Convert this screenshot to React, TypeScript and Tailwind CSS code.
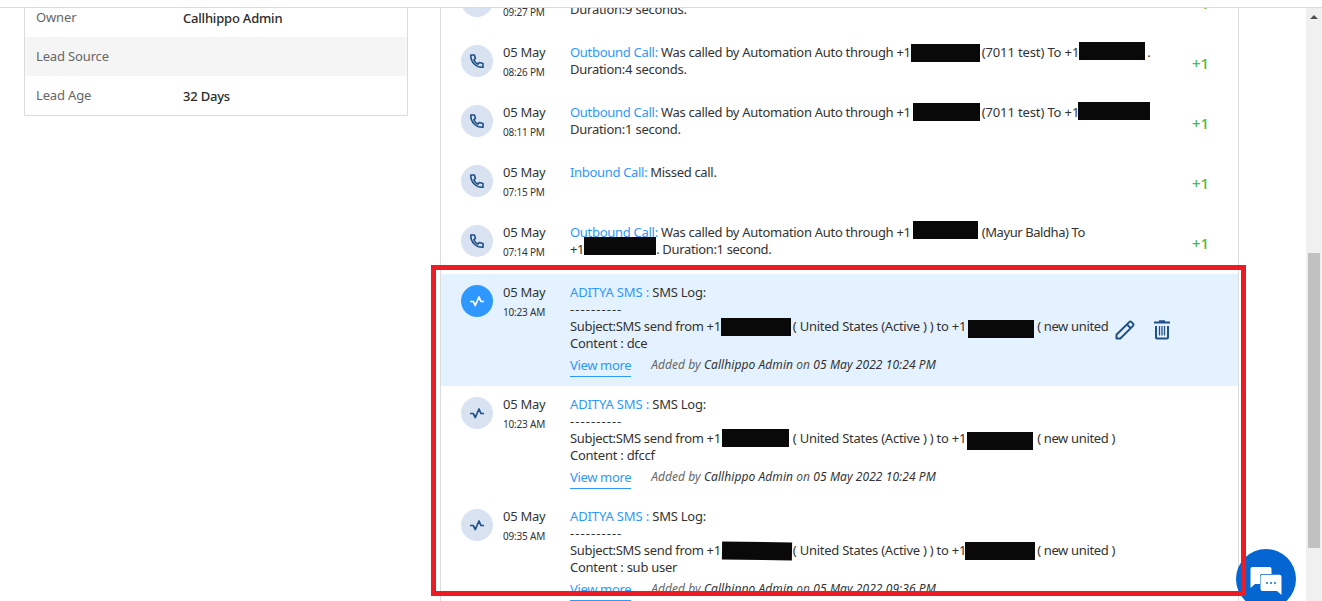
import type { ReactNode } from "react";
import clsx from "clsx";

function PhoneIcon() {
  return (
    <svg viewBox="0 0 16 16" className="h-4 w-4" fill="none" stroke="#1f5088" strokeWidth="1.6" strokeLinejoin="round">
      <path d="M1.8 2h3.6l1 3.5-1.6 1.3c.8 1.9 2.1 3.4 4.1 4.3l1.4-1.6 3.7 1v3.7C7.2 14.6 1.5 9.2 1.8 2z" />
    </svg>
  );
}

function PulseIcon() {
  return (
    <svg viewBox="0 0 16 16" className="h-4 w-4" fill="none" stroke="currentColor" strokeWidth="1.7" strokeLinejoin="round">
      <path d="M1 8.5h3.3l2 4L10 4l2 4.500h3" />
    </svg>
  );
}

function EditIcon() {
  return (
    <svg viewBox="0 0 20 20" className="h-5 w-5" fill="none" stroke="#1f5088" strokeWidth="2" strokeLinejoin="round">
      <path d="M1.5 18.5v-3.8L14.2 2.1a1.6 1.6 0 0 1 2.3 0l1.5 1.5a1.6 1.6 0 0 1 0 2.3L5.3 18.5zM12 4.5l3.6 3.6" />
    </svg>
  );
}

function TrashIcon() {
  return (
    <svg viewBox="0 0 16 20" className="h-5 w-4" fill="none" stroke="#1f5088" strokeWidth="2">
      <path d="M0 2.500h16M5 1.300h6M2 6v11.500q0 1 1 1h10q1 0 1-1V6" />
      <path d="M5.500 6v9.500M8 6v9.500M10.500 6v9.500" strokeWidth="1.3" />
    </svg>
  );
}

// Hidden phone number: the slot keeps the number's width, the bar lies over it
function Mask({ slot, bar }: { slot: string; bar: string }) {
  return (
    <span className={clsx("relative inline-block h-[17px] align-top", slot)}>
      <span className={clsx("absolute h-[18px] bg-[#090909]", bar)} />
    </span>
  );
}

type RowProps = {
  time: string;
  icon: ReactNode;
  children: ReactNode;
  className?: string;
  active?: boolean;
  aside?: ReactNode;
};

function Row({ time, icon, children, className, active, aside }: RowProps) {
  return (
    <div className={clsx("flex shrink-0 pl-5", className, active && "bg-[#e4f2ff]")}>
      <div
        className={clsx(
          "mt-[11px] flex h-8 w-8 shrink-0 items-center justify-center rounded-full",
          active ? "bg-[#2e98ff] text-white" : "bg-[#d9e2f1] text-[#1f5088]"
        )}
      >
        {icon}
      </div>
      <div className="ml-[10px] w-[67px] shrink-0 pt-[10px]">
        <div className="text-[13px] leading-[17px] tracking-[-0.25px]">05 May</div>
        <div className="mt-[3px] text-[10px] leading-[17px] tracking-[-0.2px]">{time}</div>
      </div>
      <div className="w-[600px] shrink-0 whitespace-nowrap pt-[10px] text-[13px] leading-[17px] tracking-[-0.25px]">
        {children}
      </div>
      {aside}
    </div>
  );
}

function CallRow({ time, children }: { time: string; children: ReactNode }) {
  return (
    <Row
      time={time}
      icon={<PhoneIcon />}
      className="h-[60px]"
      aside={<div className="ml-[22px] pt-[19px] text-[15px] font-medium leading-5 text-[#43bd43]">+1</div>}
    >
      {children}
    </Row>
  );
}

function Outbound({ children }: { children: ReactNode }) {
  return (
    <div>
      <span className="tracking-[-0.29px]">
        <span className="text-[#2e98ff]">Outbound Call:</span> Was called by Automation Auto through +1
      </span>
      {children}
    </div>
  );
}

type SmsProps = {
  time: string;
  content: string;
  added: string;
  from: ReactNode;
  to: ReactNode;
  active?: boolean;
};

function SmsRow({ time, content, added, from, to, active }: SmsProps) {
  return (
    <Row
      time={time}
      icon={<PulseIcon />}
      className="h-[112px]"
      active={active}
      aside={
        active && (
          <div className="-ml-[55px] flex gap-[19px] pt-[46px]">
            <EditIcon />
            <TrashIcon />
          </div>
        )
      }
    >
      <div>
        <span className="text-[#2e98ff] tracking-[-0.12px]">ADITYA SMS :</span> SMS Log:
      </div>
      <div className="tracking-[1.05px]">----------</div>
      <div>
        <span className="tracking-[-0.32px]">Subject:SMS send from +1</span>
        {from}( United States (Active ) ) to +1{to}
        <span className="tracking-[-0.35px]">( new united{!active && " )"}</span>
      </div>
      <div>Content : {content}</div>
      <div className="mt-[3px] flex">
        <span className="h-[22px] border-b border-[#2e98ff] pt-0.5 tracking-[-0.35px] text-[#2e98ff]">View more</span>
        <span className="ml-5 pt-px text-[12px] italic tracking-[0.07px]">
          <span className="text-[#666]">Added by</span> Callhippo Admin <span className="text-[#555]">on</span> {added}
        </span>
      </div>
    </Row>
  );
}

function LeadDetails() {
  return (
    <div className="-mt-[11px] h-[119px] w-[384px] shrink-0 border border-[#dcdcdc] text-[13px] text-[#666]">
      {[
        ["Owner", "Callhippo Admin"],
        ["Lead Source", ""],
        ["Lead Age", "32 Days"],
      ].map(([label, value]) => (
        <div key={label} className="flex h-[39px] items-center pl-[11px] even:bg-[#f5f5f5]">
          <span className="w-[147px] tracking-[-0.15px]">{label}</span>
          <span className="pt-0.5 font-medium tracking-[-0.2px] text-[#2b2b2b]">{value}</span>
        </div>
      ))}
    </div>
  );
}

function Scrollbar() {
  return (
    <div className="ml-auto flex w-4 shrink-0 flex-col items-center bg-[#f0f0f0]">
      <svg viewBox="0 0 8 4" className="mt-[7px] h-1 w-2 shrink-0" fill="#505050">
        <path d="M0 4l4-4 4 4z" />
      </svg>
      <div className="mt-[234px] h-[295px] w-3 shrink-0 bg-[#c1c1c1]" />
    </div>
  );
}

function ChatButton() {
  return (
    <div className="absolute left-[1236px] top-[549px] flex h-[60px] w-[60px] items-center justify-center rounded-full bg-[#0566d1]">
      <svg viewBox="0 0 32 28" className="mt-1 h-7 w-8" fill="white">
        <path d="M2.5 0h17q2 0 2 2v5H12q-2 0-2 2v8H5l-4.500 4V2q0-2 2-2z" />
        <path d="M12.5 7.8h17q2 0 2 2V28L27 24H12.500q-2 0-2-2V9.800q0-2 2-2z" />
        <path d="M16 15h2v2h-2zM20 15h2v2h-2zM24 15h2v2h-2z" fill="#4c91dc" />
      </svg>
    </div>
  );
}

export default function App() {
  return (
    <div className="relative h-[601px] w-[1322px] overflow-hidden bg-white pt-[7px] font-['Noto_Sans',sans-serif] text-[#333]">
      <div className="flex h-[594px] overflow-hidden border-t border-[#dcdcdc] pl-6">
        <LeadDetails />
        <div className="-mt-[34px] ml-8 flex h-[700px] w-[799px] shrink-0 flex-col border-x border-[#dcdcdc]">
          <CallRow time="09:27 PM">
            <Outbound>
              <Mask slot="w-[71px]" bar="left-0 top-0 w-[69px]" />
            </Outbound>
            <div>Duration:9 seconds.</div>
          </CallRow>
          <CallRow time="08:26 PM">
            <Outbound>
              <Mask slot="w-[71px]" bar="left-0 top-0 w-[69px]" />
              <span className="tracking-[-0.13px]">(7011 test) To +1</span>
              <Mask slot="w-[68px]" bar="left-0 -top-[2px] w-[66px]" />.
            </Outbound>
            <div>Duration:4 seconds.</div>
          </CallRow>
          <CallRow time="08:11 PM">
            <Outbound>
              <Mask slot="w-[71px]" bar="left-[2px] -top-px w-[67px]" />
              <span className="tracking-[-0.13px]">(7011 test) To +1</span>
              <Mask slot="w-[68px]" bar="-left-px -top-[2px] w-[72px]" />
            </Outbound>
            <div>Duration:1 second.</div>
          </CallRow>
          <CallRow time="07:15 PM">
            <span className="tracking-[-0.32px]">
              <span className="text-[#2e98ff]">Inbound Call:</span> Missed call.
            </span>
          </CallRow>
          <CallRow time="07:14 PM">
            <Outbound>
              <Mask slot="w-[71px]" bar="left-[2px] -top-[3px] w-[65px]" />
              <span className="tracking-[-0.42px]">(Mayur Baldha) To</span>
            </Outbound>
            <div className="tracking-[-0.35px]">
              +1
              <Mask slot="w-[72px]" bar="left-0 -top-[4px] w-[72px]" />. Duration:1 second.
            </div>
          </CallRow>
          <SmsRow
            active
            time="10:23 AM"
            content="dce"
            added="05 May 2022 10:24 PM"
            from={<Mask slot="w-[72px]" bar="left-0 top-0 w-[70px]" />}
            to={<Mask slot="w-[71px]" bar="left-[2px] top-[2px] w-[66px]" />}
          />
          <SmsRow
            time="10:23 AM"
            content="dfccf"
            added="05 May 2022 10:24 PM"
            from={<Mask slot="w-[72px]" bar="left-px -top-px w-[67px]" />}
            to={<Mask slot="w-[71px]" bar="left-px top-[2px] w-[66px]" />}
          />
          <SmsRow
            time="09:35 AM"
            content="sub user"
            added="05 May 2022 09:36 PM"
            from={<Mask slot="w-[72px]" bar="left-px top-0 w-[70px] rotate-[0.8deg]" />}
            to={<Mask slot="w-[71px]" bar="-left-px top-0 w-[70px]" />}
          />
        </div>
        <Scrollbar />
      </div>
      <ChatButton />
      <div className="absolute left-[431px] top-[265px] h-[331px] w-[815px] border-[5px] border-[#ed1c24]" />
    </div>
  );
}
